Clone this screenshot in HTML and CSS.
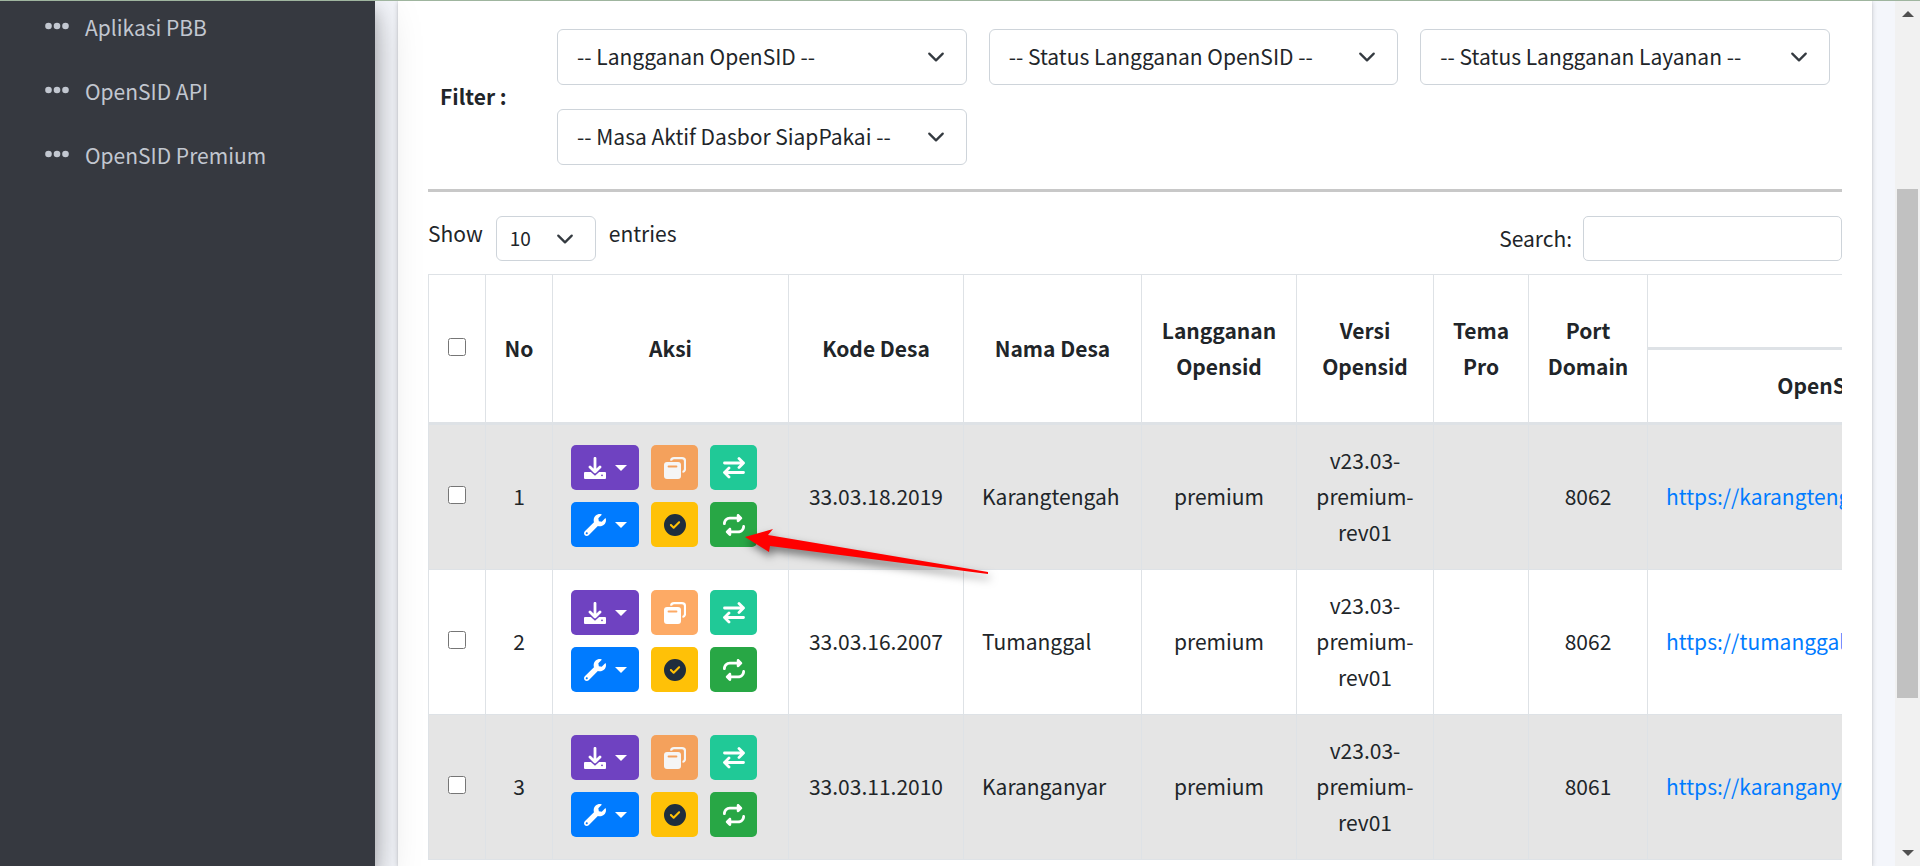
FILE: index.html
```
<!DOCTYPE html>
<html lang="id">
<head>
<meta charset="utf-8">
<title>Dasbor OpenSID</title>
<link rel="stylesheet" href="styles.css">
</head>
<body>
<svg class="sprite" aria-hidden="true">
  <symbol id="dots" viewBox="0 0 24 8"><circle cx="3.5" cy="4" r="3.3"/><circle cx="12" cy="4" r="3.3"/><circle cx="20.5" cy="4" r="3.3"/></symbol>
  <symbol id="download" viewBox="0 0 22 22">
    <path d="M1 15H21Q22 15 22 16V21Q22 22 21 22H1Q0 22 0 21V16Q0 15 1 15Z" fill="#fff"/>
    <path d="M6.500 12L11 16L15.500 12" fill="none" stroke="#6f42c1" stroke-width="4"/>
    <path d="M11 1.300V14.500M6 10L11 15L16 10" fill="none" stroke="#fff" stroke-width="2.800" stroke-linecap="round" stroke-linejoin="round"/>
    <circle cx="18" cy="18.300" r="0.900" fill="#6f42c1"/>
  </symbol>
  <symbol id="copy" viewBox="0 0 22 22">
    <path d="M7 3.600Q7.500 1.200 10 1.200H18Q21 1.200 21 4V12Q21 14.500 18.500 15" fill="none" stroke="#fff" stroke-width="2.200"/>
    <rect y="5" width="17" height="17" rx="3" fill="#fff"/>
    <path d="M4.500 9.500H12.500" stroke="#fd7e14" stroke-width="1.800" stroke-linecap="round"/>
  </symbol>
  <symbol id="swap" viewBox="0 0 22 22"><path d="M1.500 6H20.500M16 1.500L20.500 6L16 10.500M20.500 15.500H1.500M6 11L1.500 15.500L6 20" fill="none" stroke="#fff" stroke-width="2.800" stroke-linecap="round" stroke-linejoin="round"/></symbol>
  <symbol id="wrench" viewBox="0 0 512 512"><path fill="#fff" d="M507.73 109.1c-2.24-9.03-13.54-12.09-20.12-5.51l-74.36 74.36-67.88-11.31-11.31-67.88 74.36-74.36c6.62-6.62 3.43-17.9-5.66-20.16-47.38-11.74-99.55.91-136.58 37.93-39.64 39.64-50.55 97.1-34.05 147.2L18.74 402.76c-24.99 24.99-24.99 65.51 0 90.5 24.99 24.99 65.51 24.99 90.5 0l213.21-213.21c50.12 16.71 107.47 5.68 147.37-34.22 37.07-37.07 49.7-89.32 37.91-136.73zM64 472c-13.25 0-24-10.75-24-24 0-13.26 10.75-24 24-24s24 10.74 24 24c0 13.25-10.75 24-24 24z"/></symbol>
  <symbol id="check" viewBox="0 0 512 512"><path fill="#1f2d3d" d="M256 512A256 256 0 1 0 256 0a256 256 0 1 0 0 512zM369 209L241 337c-9.4 9.4-24.6 9.4-33.9 0l-64-64c-9.4-9.4-9.4-24.6 0-33.9s24.6-9.4 33.9 0l47 47L335 175c9.4-9.4 24.6-9.4 33.9 0s9.4 24.6 0 33.9z"/></symbol>
  <symbol id="repeat" viewBox="0 0 512 512"><path fill="#fff" d="M0 224c0 17.7 14.3 32 32 32s32-14.3 32-32c0-53 43-96 96-96H320v32c0 12.9 7.8 24.6 19.8 29.6s25.7 2.200 34.9-6.900l64-64c12.5-12.5 12.5-32.800 0-45.300l-64-64c-9.200-9.200-22.900-11.900-34.900-6.900S320 19.100 320 32V64H160C71.600 64 0 135.600 0 224zm512 64c0-17.700-14.300-32-32-32s-32 14.300-32 32c0 53-43 96-96 96H192V352c0-12.900-7.800-24.600-19.800-29.600s-25.700-2.200-34.900 6.900l-64 64c-12.500 12.500-12.500 32.800 0 45.300l64 64c9.200 9.200 22.900 11.900 34.900 6.900s19.800-16.600 19.800-29.600V448H352c88.400 0 160-71.600 160-160z"/></symbol>
</svg>
<div class="page">
  <nav class="sidebar">
    <a class="nav-link" href="#pbb"><svg class="nav-icon"><use href="#dots"/></svg>Aplikasi PBB</a>
    <a class="nav-link" href="#api"><svg class="nav-icon"><use href="#dots"/></svg>OpenSID API</a>
    <a class="nav-link" href="#premium"><svg class="nav-icon"><use href="#dots"/></svg>OpenSID Premium</a>
  </nav>
  <main class="content">
    <section class="card">
      <div class="filters">
        <strong class="filter-title">Filter :</strong>
        <div class="filter-grid">
          <select class="select" aria-label="Langganan OpenSID"><option>-- Langganan OpenSID --</option></select>
          <select class="select" aria-label="Status Langganan OpenSID"><option>-- Status Langganan OpenSID --</option></select>
          <select class="select" aria-label="Status Langganan Layanan"><option>-- Status Langganan Layanan --</option></select>
          <select class="select" aria-label="Masa Aktif Dasbor SiapPakai"><option>-- Masa Aktif Dasbor SiapPakai --</option></select>
        </div>
      </div>
      <hr class="divider">
      <div class="toolbar">
        <div class="length">
          <label for="entries">Show</label>
          <select class="select select-small" id="entries"><option>10</option></select>
          <span>entries</span>
        </div>
        <div class="search">
          <label for="search">Search:</label>
          <input class="search-input" id="search" type="search">
        </div>
      </div>
      <div class="table-wrap">
        <table class="table">
          <colgroup><col class="c-check"><col class="c-no"><col class="c-aksi"><col class="c-kode"><col class="c-nama"><col class="c-langganan"><col class="c-versi"><col class="c-tema"><col class="c-port"><col class="c-url"></colgroup>
          <thead>
            <tr>
              <th rowspan="2"><input class="check" type="checkbox" aria-label="Pilih semua"></th>
              <th rowspan="2">No</th>
              <th rowspan="2">Aksi</th>
              <th rowspan="2">Kode Desa</th>
              <th rowspan="2">Nama Desa</th>
              <th rowspan="2">Langganan Opensid</th>
              <th rowspan="2">Versi Opensid</th>
              <th rowspan="2">Tema Pro</th>
              <th rowspan="2">Port Domain</th>
              <th></th>
            </tr>
            <tr><th>OpenSID</th></tr>
          </thead>
          <tbody>
            <tr>
              <td><input class="check" type="checkbox" aria-label="Pilih baris 1"></td>
              <td>1</td>
              <td>
                <div class="actions">
                  <button class="btn purple" aria-label="Unduh"><svg class="icon"><use href="#download"/></svg><span class="caret"></span></button>
                  <button class="btn orange" aria-label="Salin" disabled><svg class="icon"><use href="#copy"/></svg></button>
                  <button class="btn teal" aria-label="Pindah"><svg class="icon"><use href="#swap"/></svg></button>
                  <button class="btn blue" aria-label="Pengaturan"><svg class="icon"><use href="#wrench"/></svg><span class="caret"></span></button>
                  <button class="btn yellow" aria-label="Aktifkan"><svg class="icon"><use href="#check"/></svg></button>
                  <button class="btn green" aria-label="Perbarui"><svg class="icon"><use href="#repeat"/></svg></button>
                </div>
              </td>
              <td>33.03.18.2019</td>
              <td class="left">Karangtengah</td>
              <td>premium</td>
              <td>v23.03-premium-rev01</td>
              <td></td>
              <td>8062</td>
              <td class="left"><a class="link" href="#karangtengah">https://karangtengah</a></td>
            </tr>
            <tr>
              <td><input class="check" type="checkbox" aria-label="Pilih baris 2"></td>
              <td>2</td>
              <td>
                <div class="actions">
                  <button class="btn purple" aria-label="Unduh"><svg class="icon"><use href="#download"/></svg><span class="caret"></span></button>
                  <button class="btn orange" aria-label="Salin" disabled><svg class="icon"><use href="#copy"/></svg></button>
                  <button class="btn teal" aria-label="Pindah"><svg class="icon"><use href="#swap"/></svg></button>
                  <button class="btn blue" aria-label="Pengaturan"><svg class="icon"><use href="#wrench"/></svg><span class="caret"></span></button>
                  <button class="btn yellow" aria-label="Aktifkan"><svg class="icon"><use href="#check"/></svg></button>
                  <button class="btn green" aria-label="Perbarui"><svg class="icon"><use href="#repeat"/></svg></button>
                </div>
              </td>
              <td>33.03.16.2007</td>
              <td class="left">Tumanggal</td>
              <td>premium</td>
              <td>v23.03-premium-rev01</td>
              <td></td>
              <td>8062</td>
              <td class="left"><a class="link" href="#tumanggal">https://tumanggal</a></td>
            </tr>
            <tr>
              <td><input class="check" type="checkbox" aria-label="Pilih baris 3"></td>
              <td>3</td>
              <td>
                <div class="actions">
                  <button class="btn purple" aria-label="Unduh"><svg class="icon"><use href="#download"/></svg><span class="caret"></span></button>
                  <button class="btn orange" aria-label="Salin" disabled><svg class="icon"><use href="#copy"/></svg></button>
                  <button class="btn teal" aria-label="Pindah"><svg class="icon"><use href="#swap"/></svg></button>
                  <button class="btn blue" aria-label="Pengaturan"><svg class="icon"><use href="#wrench"/></svg><span class="caret"></span></button>
                  <button class="btn yellow" aria-label="Aktifkan"><svg class="icon"><use href="#check"/></svg></button>
                  <button class="btn green" aria-label="Perbarui"><svg class="icon"><use href="#repeat"/></svg></button>
                </div>
              </td>
              <td>33.03.11.2010</td>
              <td class="left">Karanganyar</td>
              <td>premium</td>
              <td>v23.03-premium-rev01</td>
              <td></td>
              <td>8061</td>
              <td class="left"><a class="link" href="#karanganyar">https://karanganyar</a></td>
            </tr>
          </tbody>
        </table>
      </div>
    </section>
  </main>
  <div class="scrollbar" aria-hidden="true">
    <span class="scroll-up"></span>
    <span class="scroll-track"><span class="scroll-thumb"></span></span>
    <span class="scroll-down"></span>
  </div>
  <svg class="pointer" viewBox="0 0 260 60" aria-hidden="true"><path d="M6 18L34 10L29 16L249 53V55L31 27L30 33Z" fill="#f00"/></svg>
</div>
</body>
</html>
```
FILE: styles.css
```
* { box-sizing: border-box; }
body {
  margin: 0;
  font-family: "Noto Sans CJK SC", "Noto Sans", sans-serif;
  font-size: 21px;
  line-height: 36px;
  color: #212529;
}
.sprite { display: none; }
.page {
  position: relative;
  display: flex;
  height: 100vh;
  overflow: hidden;
  border-top: 1px solid #9fb59f;
  background: #f4f6fb;
}
.sidebar {
  z-index: 1;
  flex: 0 0 375px;
  display: flex;
  flex-direction: column;
  gap: 10px;
  background: #363940;
  box-shadow: 0 14px 42px rgba(0, 0, 0, .25), 0 10px 15px rgba(0, 0, 0, .22);
}
.nav-link {
  display: flex;
  align-items: center;
  gap: 16px;
  padding: 8px 45px 10px;
  color: #c2c7d0;
  text-decoration: none;
}
.nav-icon { width: 24px; height: 8px; margin-bottom: 2px; fill: currentColor; }
.content { flex: 1; min-width: 0; display: flex; padding: 0 23px; }
.card {
  flex: 1;
  min-width: 0;
  padding: 28px 30px 0;
  background: #fff;
  box-shadow: 0 0 1px rgba(0, 0, 0, .125), 0 1px 5px rgba(0, 0, 0, .2);
}
.filters { display: flex; align-items: center; padding: 0 12px; }
.filter-title { flex: 0 0 117px; padding-bottom: 2px; font-weight: 700; }
.filter-grid {
  flex: 1;
  display: grid;
  grid-template-columns: repeat(3, 1fr);
  gap: 24px 22px;
}
.select {
  appearance: none;
  height: 56px;
  padding: 0 56px 2px 19px;
  border: 1px solid #ced4da;
  border-radius: 6px;
  background: #fff url("data:image/svg+xml,%3Csvg xmlns='http://www.w3.org/2000/svg' viewBox='0 0 16 16'%3E%3Cpath fill='none' stroke='%23343a40' stroke-linecap='round' stroke-linejoin='round' stroke-width='2' d='m2 5 6 6 6-6'/%3E%3C/svg%3E") no-repeat right 21px center / 18px 18px;
  color: #212529;
  font: inherit;
}
.select-small {
  width: 100px;
  height: 45px;
  padding: 0 40px 2px 13px;
  font-size: 19px;
}
.divider { height: 3px; margin: 24px 0; border: 0; background: #c8c8c8; }
.toolbar { display: flex; justify-content: space-between; margin-bottom: 13px; }
.length { display: flex; gap: 13px; }
.length label, .length span { line-height: 34px; }
.search { display: flex; align-items: center; gap: 11px; }
.search label { padding-bottom: 2px; }
.search-input {
  width: 259px;
  height: 45px;
  padding: 0 12px;
  border: 1px solid #ced4da;
  border-radius: 5px;
  background: #fff;
  font: inherit;
}
.table-wrap { overflow: hidden; }
.table {
  width: 1569px;
  table-layout: fixed;
  border-spacing: 0;
  border-top: 1px solid #dee2e6;
}
.c-check { width: 57px; }
.c-no { width: 67px; }
.c-aksi { width: 236px; }
.c-kode { width: 175px; }
.c-nama { width: 178px; }
.c-langganan { width: 155px; }
.c-versi { width: 137px; }
.c-tema { width: 95px; }
.c-port { width: 119px; }
.c-url { width: 350px; }
.table th, .table td {
  padding: 17px 18px 19px;
  border-left: 1px solid #dee2e6;
  border-bottom: 1px solid #dee2e6;
  text-align: center;
  vertical-align: middle;
}
.table th { height: 75px; padding: 17px 12px 19px; border-bottom-width: 3px; font-weight: 700; }
.table td { height: 145px; }
.table .left { text-align: left; }
.table tbody tr:nth-child(odd) { background: #e5e5e5; }
.check { display: block; width: 18px; height: 18px; margin: 0 auto 2px; }
.link { color: #007bff; text-decoration: none; }
.actions { display: grid; grid-template-columns: 68px 47px 47px; gap: 12px; }
.btn {
  display: flex;
  align-items: center;
  justify-content: center;
  gap: 9px;
  height: 45px;
  padding: 0;
  border: 0;
  border-radius: 5px;
}
.btn:disabled { opacity: .65; }
.icon { width: 22px; height: 22px; }
.caret { border: 6px solid transparent; border-top-color: #fff; border-bottom: 0; }
.purple { background: #6f42c1; }
.orange { background: #fd7e14; }
.teal { background: #20c997; }
.blue { background: #007bff; }
.yellow { background: #ffc107; }
.green { background: #28a745; }
.scrollbar {
  flex: 0 0 25px;
  display: flex;
  flex-direction: column;
  align-items: center;
  padding: 10px 2px;
  background: #f1f1f1;
}
.scroll-up { border: 6px solid transparent; border-bottom-color: #505050; border-top: 0; }
.scroll-down { border: 6px solid transparent; border-top-color: #505050; border-bottom: 0; }
.scroll-track {
  flex: 1;
  align-self: stretch;
  display: flex;
  flex-direction: column;
  padding: 172px 0 152px;
}
.scroll-thumb { flex: 1; background: #c1c1c1; }
.pointer {
  position: absolute;
  z-index: 2;
  left: 739px;
  top: 518px;
  width: 260px;
  height: 60px;
  overflow: visible;
  filter: drop-shadow(2px 5px 4px rgba(0, 0, 0, .5));
}
```
